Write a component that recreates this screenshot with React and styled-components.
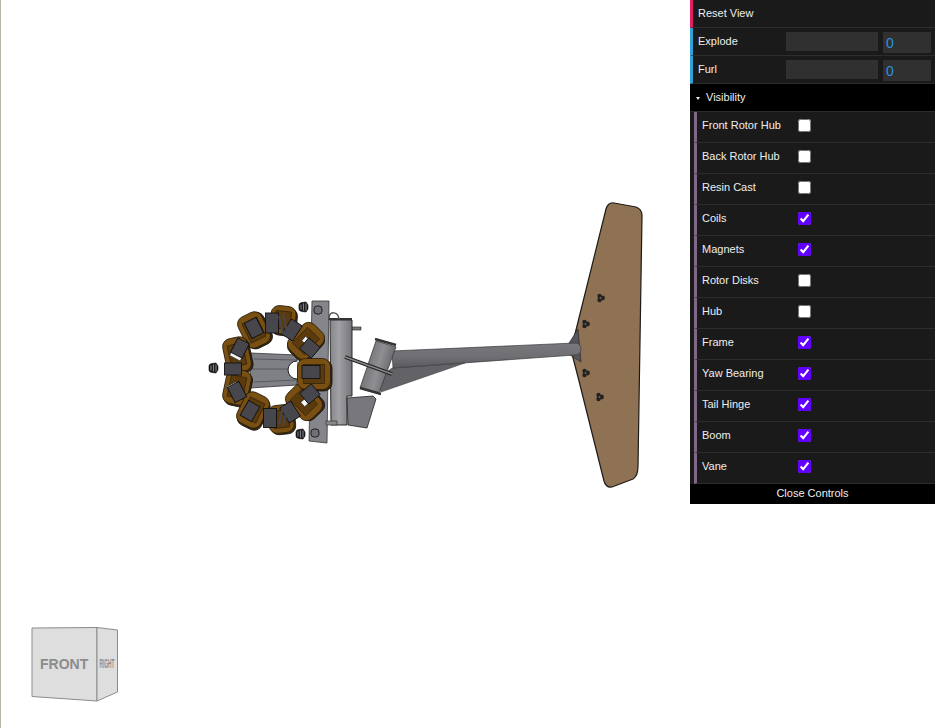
import React from "react";
import styled, { createGlobalStyle } from "styled-components";

const Global = createGlobalStyle`
  html, body { margin: 0; padding: 0; background: #fff; overflow: hidden; }
  body { font-family: "Liberation Sans", Arial, sans-serif; }
`;
const Page = styled.div`
  display: flex;
  width: 935px;
  height: 728px;
  background: #fff;
`;
const Viewport = styled.div`
  position: relative;
  width: 690px;
  height: 728px;
  flex: none;
  box-sizing: border-box;
  border-left: 1px solid #b9b6a9;
`;
const Scene = styled.svg`
  display: block;
  width: 689px;
  height: 728px;
`;
const Cube = styled.svg`
  position: absolute;
  left: 28px;
  top: 625px;
  width: 92px;
  height: 80px;
`;
const CubeLabel = styled.text`
  font-family: "Liberation Sans", Arial, sans-serif;
  font-weight: 700;
  fill: #8c8c8c;
`;
const Panel = styled.div`
  width: 245px;
  flex: none;
  align-self: flex-start;
  background: #1a1a1a;
  color: #eee;
  font-size: 11px;
  line-height: 1;
`;
const Row = styled.div`
  display: flex;
  align-items: center;
  box-sizing: border-box;
  height: 28px;
  padding: 0 4px 0 5px;
  border-left: 3px solid ${(p) => p.$accent};
  border-bottom: 1px solid #2c2c2c;
`;
const RowLabel = styled.span`
  width: 88px;
  flex: none;
`;
const Slider = styled.div`
  width: 92px;
  height: 19px;
  margin-right: 5px;
  background: #303030;
`;
const NumberField = styled.input`
  box-sizing: border-box;
  width: 48px;
  height: 21px;
  margin-top: 2px;
  padding: 1px 3px 0;
  border: 0;
  outline: 0;
  border-radius: 0;
  background: #303030;
  color: #2c91e0;
  font: 14px "Liberation Sans", Arial, sans-serif;
`;
const FolderTitle = styled.div`
  display: flex;
  align-items: center;
  gap: 6px;
  box-sizing: border-box;
  height: 28px;
  padding-left: 6px;
  background: #000;
  border-bottom: 1px solid #2c2c2c;
`;
const Caret = styled.i`
  width: 0;
  height: 0;
  margin-top: 1px;
  border-left: 2.5px solid transparent;
  border-right: 2.5px solid transparent;
  border-top: 3px solid #eee;
`;
const Folder = styled.div`
  padding-left: 4px;
`;
const CheckRow = styled.label`
  display: flex;
  align-items: center;
  box-sizing: border-box;
  height: 31px;
  padding: 0 0 4px 5px;
  border-left: 3px solid #806787;
  border-bottom: 1px solid #2c2c2c;
`;
const CheckLabel = styled.span`
  width: 96px;
  flex: none;
`;
const Check = styled.input`
  width: 13px;
  height: 13px;
  margin: 1px 0 0 0;
  accent-color: #6200ff;
`;
const CloseBar = styled.div`
  display: flex;
  align-items: center;
  justify-content: center;
  height: 20px;
  padding-bottom: 1px;
  box-sizing: border-box;
  background: #000;
`;

const parts = [
  ["Front Rotor Hub", false],
  ["Back Rotor Hub", false],
  ["Resin Cast", false],
  ["Coils", true],
  ["Magnets", true],
  ["Rotor Disks", false],
  ["Hub", false],
  ["Frame", true],
  ["Yaw Bearing", true],
  ["Tail Hinge", true],
  ["Boom", true],
  ["Vane", true],
];

/* x, y, rotation, width, height */
const coils = [
  [283, 320, 6, 25, 28],
  [254, 330, -26, 26, 34],
  [306, 341, 44, 27, 35],
  [237, 355, -12, 25, 35],
  [237, 387, 12, 25, 35],
  [253, 410, 26, 26, 34],
  [281, 419, -6, 25, 28],
  [304, 402, -44, 27, 35],
  [314, 374, 0, 33, 31],
];

const magnets = [
  [272, 323, 0, 13, 20],
  [254, 328, -27, 13, 17],
  [292, 330, 33, 13, 18],
  [240, 348, 27, 13, 16],
  [233, 369, 0, 17, 12],
  [237, 392, -27, 13, 17],
  [250, 411, 30, 13, 17],
  [270, 418, 0, 13, 19],
  [290, 412, -33, 13, 18],
  [311, 372, 0, 18, 13],
];

/* white gaps seen between a coil and its magnet */
const gaps = [
  [309, 343, 40, 14, 6],
  [236, 356, 28, 12, 5],
  [232, 386, -28, 11, 4],
  [308, 400, -40, 14, 6],
];

const tilted = [
  [310, 348, 40, 15, 14],
  [310, 394, -40, 15, 14],
];

function Bolt({ x, y }) {
  return (
    <g transform={`translate(${x} ${y})`}>
      <path d="M-7-2Q-7-4-4-4.500L0-5 2-2V2L0 5-4 4.500Q-7 4-7 2Z" fill="#1f1f22" stroke="#000" strokeWidth=".6" />
      <path d="M-5-2.500V2.500M-2.500-3.500V3.500M0-3.500V3.500" stroke="#9a9a9e" strokeWidth=".8" />
    </g>
  );
}

function VaneNut({ x, y }) {
  return (
    <g transform={`translate(${x} ${y})`}>
      <circle cx="-1.500" cy="-2" r="2.200" fill="#222" />
      <circle cx="-1.500" cy="2" r="2.200" fill="#222" />
      <circle cx="1.500" cy="0" r="2.400" fill="#222" />
      <circle cx="-.500" cy="0" r=".9" fill="#7a644d" />
    </g>
  );
}

export default function App() {
  return (
    <Page>
      <Global />
      <Viewport>
        <Scene viewBox="1 0 689 728">
          <defs>
            <linearGradient id="boom" x1="0" y1="0" x2="0" y2="1">
              <stop offset="0" stopColor="#78787d" />
              <stop offset=".55" stopColor="#6e6e73" />
              <stop offset="1" stopColor="#59595e" />
            </linearGradient>
            <linearGradient id="yaw" x1="0" y1="0" x2="1" y2="0">
              <stop offset="0" stopColor="#85858a" />
              <stop offset=".4" stopColor="#a0a0a5" />
              <stop offset="1" stopColor="#75757a" />
            </linearGradient>
            <linearGradient id="hinge" gradientUnits="userSpaceOnUse" x1="362" y1="362" x2="392" y2="370">
              <stop offset="0" stopColor="#6c6c71" />
              <stop offset=".55" stopColor="#8e8e93" />
              <stop offset="1" stopColor="#646469" />
            </linearGradient>
          </defs>

          {/* vane */}
          <path
            d="M606 209Q608 202 614 203L636 207Q642 209 642 216L638 466Q638 476 633 479L612 487Q606 488 604 481L578 377 571 350 578 322Z"
            fill="#8f7254"
            stroke="#1d1a17"
            strokeWidth="1.200"
            strokeLinejoin="round"
          />
          <path d="M569 343 578 329 581 362 570 355Z" fill="#55555b" stroke="#222" strokeWidth=".6" />
          <VaneNut x={601} y={298} />
          <VaneNut x={586} y={324} />
          <VaneNut x={586} y={373} />
          <VaneNut x={600} y={397} />

          {/* lower strut and boom */}
          <path d="M392 368 465 363 381 392 376 380Z" fill="#626267" stroke="#333" strokeWidth=".5" />
          <path
            d="M392 351 575 343Q581 343 581 349 581 355 575 355L393 368Z"
            fill="url(#boom)"
            stroke="#3a3a3e"
            strokeWidth=".7"
          />

          {/* yaw tube */}
          <path d="M352 327H361V330H352Z" fill="#77777c" stroke="#333" strokeWidth=".7" />
          <path d="M330 320H352V396H347V425H331Z" fill="url(#yaw)" stroke="#2b2b2e" />
          <path d="M327 319H352" stroke="#333" strokeWidth="2" />
          <path d="M329 318C329 311 338 311 339 319" fill="none" stroke="#555" strokeWidth="1.500" />

          {/* bracket */}
          <path d="M347 398 373 396 376 399 367 428 348 425Z" fill="#77777c" stroke="#222" strokeWidth=".8" />

          {/* hinge */}
          <path d="M376 341 396 347 379 393 360 388Z" fill="url(#hinge)" stroke="#3b3b3f" strokeWidth=".8" />
          <path d="M375 339 396 345" stroke="#333" strokeWidth="2.500" />
          <path d="M360 388 381 394" stroke="#333" strokeWidth="2.500" />
          <path d="M345 357 392 374" stroke="#222" strokeWidth="3.500" />
          <path d="M345 357 392 374" stroke="#87878c" strokeWidth="1.500" />

          {/* rotor hub behind coils */}
          <path d="M250 353 297 355V385L250 388Z" fill="#7f7f86" stroke="#333" strokeWidth=".8" />
          <path d="M252 369H294M254 359 296 360M254 382 296 380" stroke="#47474c" strokeWidth=".7" />
          <path d="M297 361A9 9 0 0 0 297 379" fill="#fff" stroke="#222" />

          {/* frame plate */}
          <path d="M312 301H329L327 443 309 441Z" fill="#85858c" stroke="#333" strokeWidth=".8" />
          <path d="M326 421H337V425H326Z" fill="#888" stroke="#333" strokeWidth=".7" />
          <Bolt x={306} y={307} />
          <rect x="314" y="306" width="8" height="8" rx="3" fill="#6f6f75" stroke="#222" />
          <Bolt x={303} y={434} />
          <rect x="311" y="429" width="8" height="8" rx="3" fill="#6f6f75" stroke="#222" />
          <Bolt x={216} y={368} />

          {/* coils */}
          {coils.map(([x, y, r, w, h], i) => (
            <g key={i} transform={`translate(${x} ${y}) rotate(${r})`}>
              <rect x={-w / 2 + 1.500} y={-h / 2 + 1.500} width={w} height={h} rx="8" fill="#3b2a10" stroke="#15110b" strokeWidth=".8" />
              <rect x={-w / 2} y={-h / 2} width={w} height={h} rx="8" fill="#7a5012" stroke="#241b0c" strokeWidth=".8" />
              <rect x={-w / 3.2} y={-h / 3.2} width={w / 1.6} height={h / 1.6} fill="#5b3b0e" stroke="#241b0c" strokeWidth=".6" />
            </g>
          ))}
          {gaps.map(([x, y, r, w, h], i) => (
            <rect key={i} x={-w / 2} y={-h / 2} width={w} height={h} fill="#f4f4f4" stroke="#222" strokeWidth=".6" transform={`translate(${x} ${y}) rotate(${r})`} />
          ))}
          {magnets.map(([x, y, r, w, h], i) => (
            <rect key={i} x={-w / 2} y={-h / 2} width={w} height={h} fill="#47464d" stroke="#111" strokeWidth=".9" transform={`translate(${x} ${y}) rotate(${r})`} />
          ))}
          {tilted.map(([x, y, r, w, h], i) => (
            <rect key={i} x={-w / 2} y={-h / 2} width={w} height={h} fill="#47464d" stroke="#111" strokeWidth=".9" transform={`translate(${x} ${y}) rotate(${r})`} />
          ))}
          <path d="M279 316 283 334M283 314 287 332M279 424 283 406M283 426 287 408" stroke="#47464d" strokeWidth="2" />
        </Scene>
        <Cube viewBox="29 625 92 80">
          <path d="M32 628 97 627.500V701L32 696.500Z" fill="#dedede" stroke="#8b8b8b" />
          <path d="M97 627.500 117.500 630V692L97 701Z" fill="#dedede" stroke="#8b8b8b" />
          <CubeLabel x="40" y="669" fontSize="14">
            FRONT
          </CubeLabel>
          <CubeLabel transform="translate(99.500 668) scale(.4 1)" fontSize="12">
            RIGHT
          </CubeLabel>
        </Cube>
      </Viewport>
      <Panel>
        <Row $accent="#e61d5f">Reset View</Row>
        <Row $accent="#2fa1d6">
          <RowLabel>Explode</RowLabel>
          <Slider />
          <NumberField defaultValue="0" />
        </Row>
        <Row $accent="#2fa1d6">
          <RowLabel>Furl</RowLabel>
          <Slider />
          <NumberField defaultValue="0" />
        </Row>
        <FolderTitle>
          <Caret />
          Visibility
        </FolderTitle>
        <Folder>
          {parts.map(([name, on]) => (
            <CheckRow key={name}>
              <CheckLabel>{name}</CheckLabel>
              <Check type="checkbox" defaultChecked={on} />
            </CheckRow>
          ))}
        </Folder>
        <CloseBar>Close Controls</CloseBar>
      </Panel>
    </Page>
  );
}
